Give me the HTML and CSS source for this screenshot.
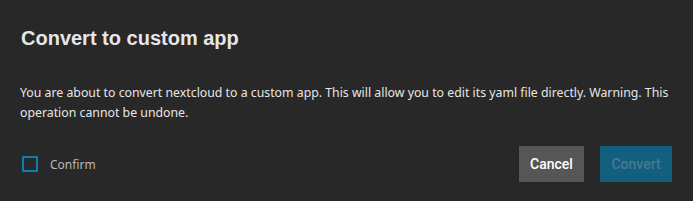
FILE: index.html
```html
<!DOCTYPE html>
<html lang="en">
<head>
    <meta charset="UTF-8">
    <meta name="viewport" content="width=device-width, initial-scale=1.0">
    <title>Convert to custom app</title>
    <link rel="stylesheet" href="styles.css">
</head>
<body>
    <div class="dialog">
        <h1 class="dialog-title">Convert to custom app</h1>
        <p class="dialog-message">You are about to convert nextcloud to a custom app. This will allow you to edit its yaml file directly. Warning. This operation cannot be undone.</p>
        <div class="dialog-actions">
            <label class="confirm">
                <span class="checkbox"></span>
                <span class="confirm-label">Confirm</span>
            </label>
            <div class="buttons">
                <button class="btn btn-cancel">Cancel</button>
                <button class="btn btn-convert" disabled>Convert</button>
            </div>
        </div>
    </div>
</body>
</html>
```

FILE: styles.css
```css
body {
    margin: 0;
    background-color: #282828;
    font-family: "Noto Sans", sans-serif;
}
.dialog {
    width: 693px;
    height: 201px;
    box-sizing: border-box;
    padding: 24px 21px 0 20px;
}
.dialog-title {
    margin: 0 0 0 1px;
    font-family: "Liberation Sans", Arial, sans-serif;
    font-size: 20px;
    font-weight: bold;
    line-height: 28px;
    color: #e6e6e6;
}
.dialog-message {
    margin: 31px 0 0 0;
    font-size: 12.3px;
    line-height: 20px;
    color: #e6e6e6;
}
.dialog-actions {
    display: flex;
    justify-content: space-between;
    align-items: center;
    margin-top: 23px;
}
.confirm {
    display: flex;
    align-items: center;
    margin-left: 2px;
}
.checkbox {
    width: 12px;
    height: 12px;
    border: 2px solid #0d7db1;
    border-radius: 1px;
}
.confirm-label {
    margin-left: 12px;
    font-size: 12px;
    color: #b8b8b8;
}
.buttons {
    display: flex;
    gap: 16px;
}
.btn {
    height: 36px;
    padding: 0;
    border: none;
    border-radius: 0;
    font-family: Roboto, sans-serif;
    font-size: 14px;
    font-weight: 500;
}
.btn-cancel {
    width: 65px;
    background-color: #565656;
    color: #ffffff;
}
.btn-convert {
    width: 72px;
    background-color: #135f80;
    color: #467a92;
}
```
